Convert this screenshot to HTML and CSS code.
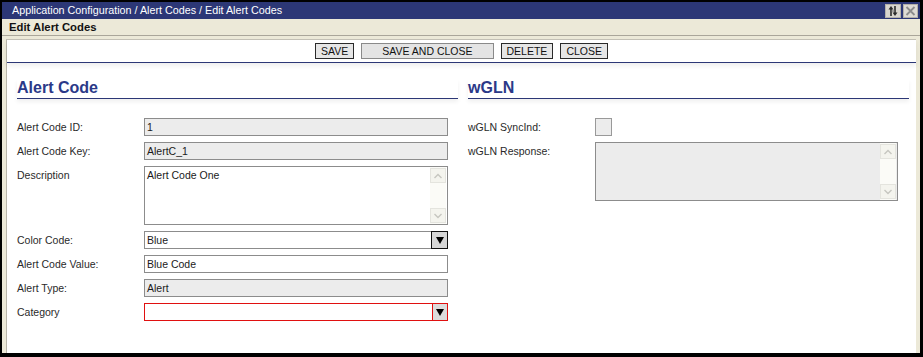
FILE: index.html
```html
<!DOCTYPE html>
<html>
<head>
<meta charset="utf-8">
<link rel="stylesheet" href="styles.css">
</head>
<body>
<div class="window">
  <div class="titlebar">
    <span class="title">Application Configuration / Alert Codes / Edit Alert Codes</span>
    <div class="tools">
      <span class="tbtn tbtn-refresh">
        <svg width="14" height="12" viewBox="0 0 14 12">
          <path d="M5 11 V3" stroke="#2a2a2a" stroke-width="1.6" fill="none"/>
          <path d="M2.5 4.5 L5 1 L7.5 4.5 Z" fill="#2a2a2a"/>
          <path d="M9 1 V9" stroke="#2a2a2a" stroke-width="1.6" fill="none"/>
          <path d="M6.5 7.5 L9 11 L11.5 7.5 Z" fill="#2a2a2a"/>
          <path d="M5 6 H9" stroke="#6a6a6a" stroke-width="1" fill="none"/>
        </svg>
      </span>
      <span class="tbtn tbtn-close">
        <svg width="13" height="12" viewBox="0 0 13 12">
          <path d="M2.5 2 L10.5 10 M10.5 2 L2.5 10" stroke="#8c8c8c" stroke-width="1.8" fill="none"/>
        </svg>
      </span>
    </div>
  </div>
  <div class="subbar">Edit Alert Codes</div>
  <div class="body">
    <div class="panel">
      <div class="toolbar">
        <span class="btn">SAVE</span>
        <span class="btn btn-wide">SAVE AND CLOSE</span>
        <span class="btn">DELETE</span>
        <span class="btn">CLOSE</span>
      </div>
      <div class="content">
        <section class="col">
          <h2 class="heading">Alert Code</h2>
          <div class="rows">
            <div class="row"><span class="label">Alert Code ID:</span><div class="field ro">1</div></div>
            <div class="row"><span class="label">Alert Code Key:</span><div class="field ro">AlertC_1</div></div>
            <div class="row"><span class="label">Description</span>
              <div class="field area"><span class="area-text">Alert Code One</span>
                <div class="sbar"><span class="sbtn"><svg width="10" height="6" viewBox="0 0 10 6"><path d="M1.5 5 L5 1.5 L8.5 5" stroke="#c6c6c0" stroke-width="1.4" fill="none"/></svg></span><span class="strack"></span><span class="sbtn"><svg width="10" height="6" viewBox="0 0 10 6"><path d="M1.5 1 L5 4.5 L8.5 1" stroke="#c6c6c0" stroke-width="1.4" fill="none"/></svg></span></div>
              </div>
            </div>
            <div class="row"><span class="label">Color Code:</span>
              <div class="field select"><span class="val">Blue</span><span class="arrow arrow-dark"><svg width="8" height="7" viewBox="0 0 8 7"><path d="M0 0 H8 L4 7 Z" fill="#000"/></svg></span></div>
            </div>
            <div class="row"><span class="label">Alert Code Value:</span><div class="field">Blue Code</div></div>
            <div class="row"><span class="label">Alert Type:</span><div class="field ro">Alert</div></div>
            <div class="row"><span class="label">Category</span>
              <div class="field select invalid"><span class="val"></span><span class="arrow arrow-red"><svg width="8" height="7" viewBox="0 0 8 7"><path d="M0 0 H8 L4 7 Z" fill="#000"/></svg></span></div>
            </div>
          </div>
        </section>
        <section class="col">
          <h2 class="heading">wGLN</h2>
          <div class="rows">
            <div class="row"><span class="label">wGLN SyncInd:</span><span class="check"></span></div>
            <div class="row"><span class="label">wGLN Response:</span>
              <div class="field area ro">
                <span class="area-text"></span>
                <div class="sbar"><span class="sbtn"><svg width="10" height="6" viewBox="0 0 10 6"><path d="M1.5 5 L5 1.5 L8.5 5" stroke="#c6c6c0" stroke-width="1.4" fill="none"/></svg></span><span class="strack"></span><span class="sbtn"><svg width="10" height="6" viewBox="0 0 10 6"><path d="M1.5 1 L5 4.5 L8.5 1" stroke="#c6c6c0" stroke-width="1.4" fill="none"/></svg></span></div>
              </div>
            </div>
          </div>
        </section>
      </div>
    </div>
  </div>
</div>
</body>
</html>
```

FILE: styles.css
```css
* { box-sizing: border-box; }
html, body { margin: 0; padding: 0; }
body {
  width: 923px;
  height: 357px;
  overflow: hidden;
  font-family: "Liberation Sans", Arial, sans-serif;
  background: #000;
}
.window {
  width: 923px;
  height: 357px;
  border-style: solid;
  border-color: #000;
  border-width: 2px 3px 4px 2px;
  background: #ece9d8;
  display: flex;
  flex-direction: column;
}
.titlebar {
  height: 17px;
  background: #2c3776;
  display: flex;
  justify-content: space-between;
  align-items: flex-start;
  flex-shrink: 0;
}
.title {
  color: #fff;
  font-size: 10.75px;
  line-height: 17px;
  padding-left: 10px;
}
.tools {
  display: flex;
  gap: 2px;
  padding: 2px 2px 0 0;
}
.tbtn {
  width: 16px;
  height: 14px;
  background: #d8d5ce;
  border: 1px solid #b4b1aa;
  display: flex;
  align-items: center;
  justify-content: center;
}
.tbtn-close { width: 15px; background: #dedbd4; }
.subbar {
  height: 17px;
  flex-shrink: 0;
  border-bottom: 1px solid #aaa69a;
  font-weight: bold;
  font-size: 11.3px;
  line-height: 16px;
  padding-left: 7px;
  color: #111;
}
.body {
  flex: 1;
  padding: 3px 4px 0 4px;
  display: flex;
}
.panel {
  flex: 1;
  background: #fff;
  border-top: 1px solid #c4c1b6;
  border-left: 1px solid #b9b6aa;
  display: flex;
  flex-direction: column;
}
.toolbar {
  display: flex;
  justify-content: center;
  gap: 7px;
  padding: 3px 0 3px 0;
  border-bottom: 1px solid #2c3776;
  box-shadow: 0 3px 5px rgba(0,0,0,0.07);
}
.btn {
  height: 16px;
  padding: 0 5px;
  background: #e6e6e6;
  border: 1px solid #2a2a2a;
  font-size: 10.5px;
  line-height: 14px;
  color: #111;
}
.btn-wide {
  padding: 0 20px;
  border-color: #8a8a8a;
  background: #e4e4e4;
}
.content {
  display: flex;
  gap: 10px;
  padding: 16px 7px 0 10px;
}
.col { flex: 1; }
.heading {
  margin: 0;
  font-size: 16px;
  line-height: 18px;
  font-weight: bold;
  color: #2b3988;
  padding-bottom: 1px;
  border-bottom: 1px solid #2c3776;
  box-shadow: 0 3px 4px rgba(0,0,0,0.06);
}
.rows {
  margin-top: 19px;
  display: flex;
  flex-direction: column;
  gap: 6px;
}
.row {
  display: flex;
  align-items: flex-start;
}
.label {
  width: 127px;
  flex-shrink: 0;
  font-size: 10.5px;
  line-height: 18px;
  color: #2a2a2a;
}
.field {
  width: 304px;
  height: 18px;
  border: 1px solid #8c8c8c;
  background: #fff;
  font-size: 10.5px;
  line-height: 16px;
  padding-left: 2px;
  color: #1a1a1a;
}
.field.ro { background: #ececec; }
.field.area {
  height: 59px;
  display: flex;
  padding-right: 1px;
}
.area-text { flex: 1; }
.sbar {
  width: 16px;
  display: flex;
  flex-direction: column;
  padding: 1px 0 1px 0;
  background: #fbfbf7;
}
.sbtn {
  height: 15px;
  background: #f4f4ee;
  border: 1px solid #e4e4de;
  display: flex;
  align-items: center;
  justify-content: center;
}
.strack { flex: 1; }
.field.select {
  display: flex;
  padding: 0;
}
.val { flex: 1; padding-left: 2px; }
.arrow {
  width: 16px;
  background: #d6d6d6;
  display: flex;
  align-items: center;
  justify-content: center;
}
.arrow-dark {
  margin: -1px -1px -1px 0;
  border: 1px solid #111;
  width: 17px;
  height: 18px;
}
.field.invalid { border-color: #e01010; }
.arrow-red { border-left: 1px solid #e01010; width: 15px; background: #dcdcdc; }
.check {
  width: 17px;
  height: 18px;
  border: 1px solid #999;
  background: #ececec;
}
.col + .col .field { width: 303px; }
```
